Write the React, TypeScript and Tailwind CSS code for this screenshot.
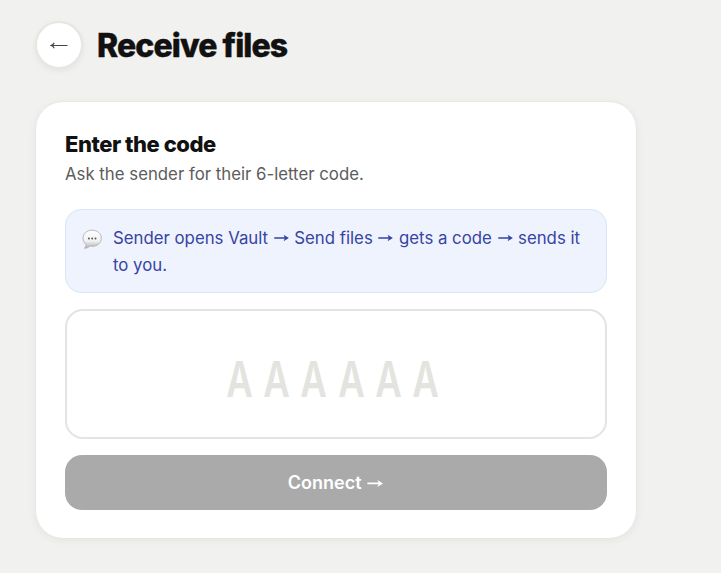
import { useState } from 'react';

const CODE_LENGTH = 6;

function BubbleIcon() {
  return (
    <svg className="mt-[4px] h-[22px] w-[20px] shrink-0" viewBox="0 0 20 22" fill="none">
      <defs>
        <linearGradient id="bubble" x1="0" y1="0" x2="0" y2="1">
          <stop offset="0" stopColor="#ffffff" />
          <stop offset="0.6" stopColor="#f1f1f1" />
          <stop offset="1" stopColor="#b0b0b2" />
        </linearGradient>
      </defs>
      <path
        d="M10.200 1.200C5 1.200 1 4.600 1 9.200c0 2.700 1.200 4.900 3.200 6.400-.1 1.500-.6 2.600-1.800 3.600 2.200.1 4.100-.7 5.400-2.100.7.1 1.600.2 2.400.2 5.200 0 9.100-3.500 9.100-8.100S15.400 1.200 10.200 1.200Z"
        fill="url(#bubble)"
        stroke="#a8a9ac"
        strokeWidth="0.8"
      />
      <circle cx="6.900" cy="9.500" r="0.950" fill="#555" />
      <circle cx="10.200" cy="9.500" r="0.950" fill="#555" />
      <circle cx="13.500" cy="9.500" r="0.950" fill="#555" />
    </svg>
  );
}

function Arrow() {
  return (
    <svg className="inline-block h-[0.6em] w-[1em] align-[0.03em]" viewBox="0 0 20 12" fill="currentColor" role="img" aria-label="→">
      <path d="M1.500 5.100h12.300L12.600 2.100 18.900 6l-6.300 3.900 1.200-3H1.500Z" />
    </svg>
  );
}

export default function App() {
  const [code] = useState('');

  return (
    <main className="min-h-screen bg-[#f1f1ef] pt-[21px] pl-[35px] font-['Inter',sans-serif] text-[#111111]">
      <header className="flex h-[48px] items-center gap-[14px]">
        <button
          aria-label="Back"
          className="flex h-[48px] w-[48px] items-center justify-center rounded-full border-2 border-[#e6e6e3] bg-white shadow-[0_2px_6px_rgba(0,0,0,0.06)]"
        >
          <svg className="mt-[2px] h-[10px] w-[18px]" viewBox="0 0 18 10" fill="none" stroke="#444" strokeWidth="1.200">
            <path d="M1 4.500h16.500M4.200 1.800C3.600 3.300 2.500 4.100 1 4.500c1.500.4 2.600 1.200 3.200 2.700" />
          </svg>
        </button>
        <h1 className="pt-[2px] text-[32px] leading-none font-extrabold tracking-[-0.9px] [-webkit-text-stroke:0.4px_#111111]">
          Receive files
        </h1>
      </header>

      <section className="mt-[32px] h-[438px] w-[602px] rounded-[28px] border border-[#e6e6e3] bg-white px-[29px] pt-[28px] shadow-[0_2px_10px_rgba(0,0,0,0.05)]">
        <h2 className="text-[22px] leading-[28px] font-extrabold tracking-[-0.47px]">Enter the code</h2>
        <p className="mt-[3px] text-[16.8px] leading-[27px] text-[#5c5c5c]">
          Ask the sender for their 6-letter code.
        </p>

        <div className="mt-[21px] flex h-[84px] gap-[11px] rounded-[16px] border border-[#d9e5f7] bg-[#eff3fe] px-[16px] pt-[15px] text-[#3644a3]">
          <BubbleIcon />
          <p className="text-[16.8px] leading-[27px] whitespace-nowrap">
            Sender opens Vault <Arrow /> Send files <Arrow /> gets a code <Arrow /> sends it
            <br />
            to you.
          </p>
        </div>

        {/* code field */}
        <div className="mt-[16px] flex h-[130px] items-center justify-center rounded-[18px] border-2 border-[#e4e4e1] pt-[10px] pr-[7px]">
          <div className="flex text-[50px] leading-none font-semibold text-[#e3e4e0]">
            {Array.from({ length: CODE_LENGTH }, (_, i) => (
              <span key={i} className="flex w-[37.3px] scale-x-[0.73] justify-center">
                {code[i] || 'A'}
              </span>
            ))}
          </div>
        </div>

        <button
          disabled={code.length < CODE_LENGTH}
          className="mt-[16px] h-[55px] w-full rounded-[17px] bg-[#aaaaaa] text-[18px] font-semibold text-white"
        >
          Connect <Arrow />
        </button>
      </section>
    </main>
  );
}
